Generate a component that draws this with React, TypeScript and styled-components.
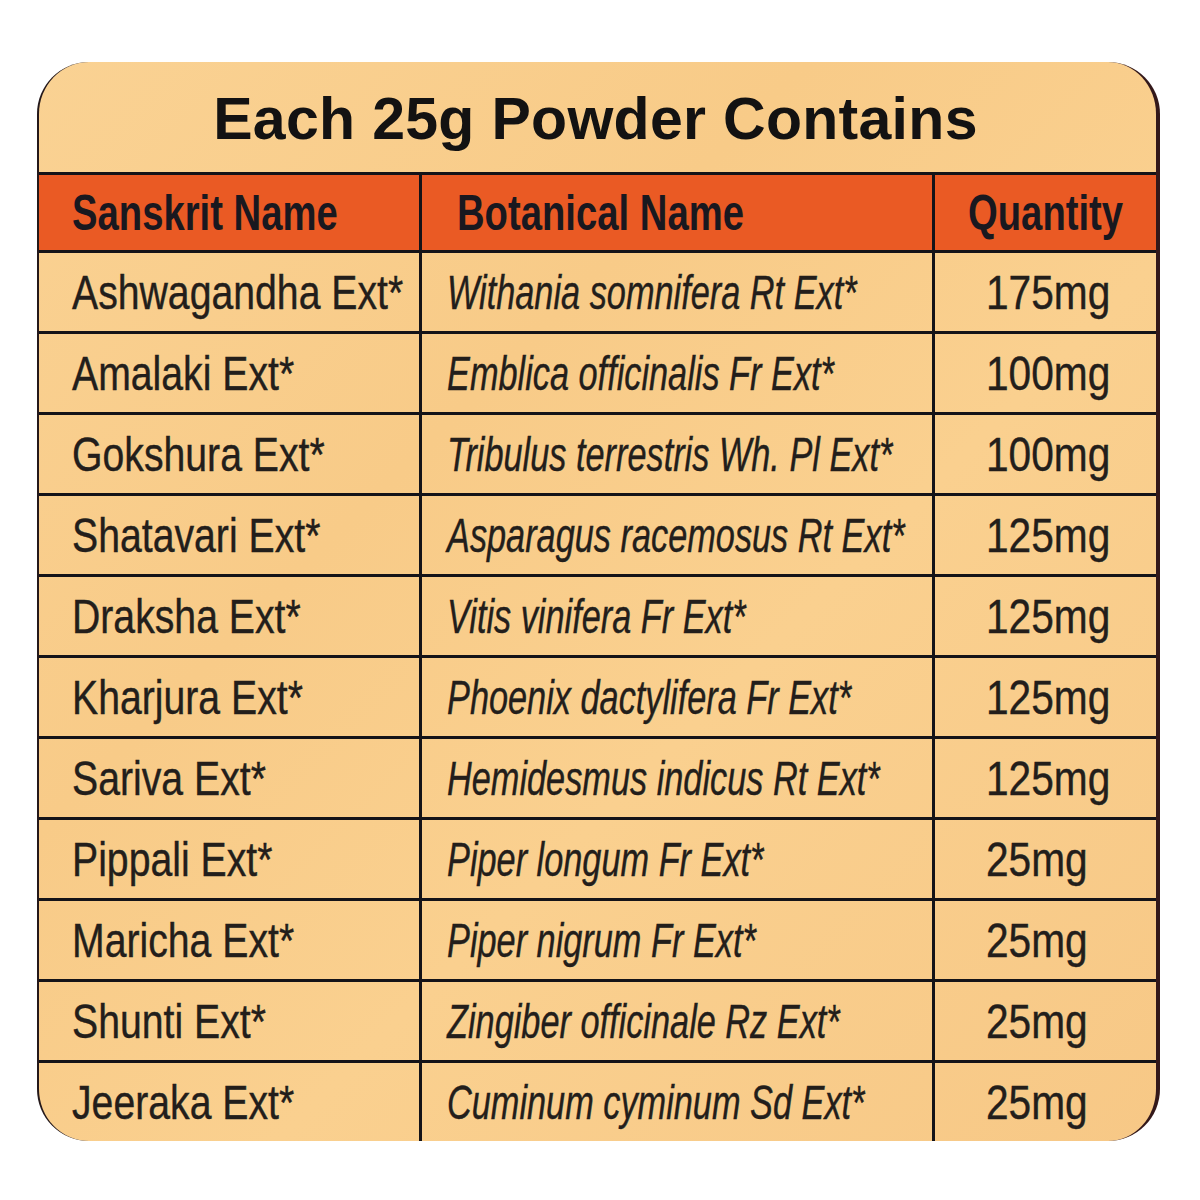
import React from 'react';
import styled, { createGlobalStyle } from 'styled-components';

const GlobalStyle = createGlobalStyle`
  html, body {
    margin: 0;
    padding: 0;
    background: #ffffff;
  }
  body {
    font-family: 'Liberation Sans', Arial, sans-serif;
  }
`;

interface Ingredient {
  sanskrit: string;
  botanical: string;
  quantity: string;
}

const ingredients: Ingredient[] = [
  { sanskrit: 'Ashwagandha Ext*', botanical: 'Withania somnifera Rt Ext*', quantity: '175mg' },
  { sanskrit: 'Amalaki Ext*', botanical: 'Emblica officinalis Fr Ext*', quantity: '100mg' },
  { sanskrit: 'Gokshura Ext*', botanical: 'Tribulus terrestris Wh. Pl Ext*', quantity: '100mg' },
  { sanskrit: 'Shatavari Ext*', botanical: 'Asparagus racemosus Rt Ext*', quantity: '125mg' },
  { sanskrit: 'Draksha Ext*', botanical: 'Vitis vinifera Fr Ext*', quantity: '125mg' },
  { sanskrit: 'Kharjura Ext*', botanical: 'Phoenix dactylifera Fr Ext*', quantity: '125mg' },
  { sanskrit: 'Sariva Ext*', botanical: 'Hemidesmus indicus Rt Ext*', quantity: '125mg' },
  { sanskrit: 'Pippali Ext*', botanical: 'Piper longum Fr Ext*', quantity: '25mg' },
  { sanskrit: 'Maricha Ext*', botanical: 'Piper nigrum Fr Ext*', quantity: '25mg' },
  { sanskrit: 'Shunti Ext*', botanical: 'Zingiber officinale Rz Ext*', quantity: '25mg' },
  { sanskrit: 'Jeeraka Ext*', botanical: 'Cuminum cyminum Sd Ext*', quantity: '25mg' },
];

const LINE = '#141318';

const Page = styled.div`
  padding: 62px 0 0 37px;
`;

const Card = styled.div`
  box-sizing: border-box;
  width: 1123px;
  background: linear-gradient(
    135deg,
    #fad293 0%,
    #f8cb88 35%,
    #fad08f 60%,
    #f7c886 100%
  );
  border-left: 2px solid #24181a;
  border-right: 4px solid #33181a;
  border-radius: 52px;
  overflow: hidden;
`;

const Title = styled.h1`
  margin: 0;
  height: 110px;
  display: flex;
  align-items: center;
  justify-content: center;
  padding-top: 4px;
  padding-right: 4px;
  box-sizing: border-box;
  font-family: 'Liberation Sans', Arial, sans-serif;
  font-weight: 700;
  font-size: 59px;
  color: #131212;
  letter-spacing: 0.3px;
`;

const Row = styled.div<{ $header?: boolean }>`
  display: grid;
  grid-template-columns: 380px 513px 1fr;
  box-sizing: border-box;
  height: ${({ $header }) => ($header ? '78px' : '81px')};
  border-top: 3px solid ${LINE};
  background: ${({ $header }) => ($header ? '#ea5a24' : 'transparent')};
`;

const Cell = styled.div<{ $divider?: boolean; $pad: number }>`
  box-sizing: border-box;
  display: flex;
  align-items: center;
  padding-left: ${({ $pad }) => $pad}px;
  border-left: ${({ $divider }) => ($divider ? `3px solid ${LINE}` : 'none')};
  white-space: nowrap;
`;

const HeadText = styled.span`
  display: inline-block;
  font-family: 'Liberation Sans', Arial, sans-serif;
  font-weight: 700;
  font-size: 50px;
  line-height: 1;
  color: #19181f;
  transform: scaleX(0.765);
  transform-origin: left center;
`;

const BodyText = styled.span<{ $italic?: boolean; $scale: number }>`
  display: inline-block;
  font-family: 'Liberation Sans', Arial, sans-serif;
  font-weight: 400;
  font-style: ${({ $italic }) => ($italic ? 'italic' : 'normal')};
  font-size: 49px;
  line-height: 1;
  color: #231e1b;
  -webkit-text-stroke: 0.4px #231e1b;
  transform: scaleX(${({ $scale }) => $scale});
  transform-origin: left center;
`;

export default function App() {
  return (
    <>
      <GlobalStyle />
      <Page>
        <Card>
          <Title>Each 25g Powder Contains</Title>
          <Row $header>
            <Cell $pad={33}>
              <HeadText>Sanskrit Name</HeadText>
            </Cell>
            <Cell $divider $pad={35}>
              <HeadText>Botanical Name</HeadText>
            </Cell>
            <Cell $divider $pad={33}>
              <HeadText>Quantity</HeadText>
            </Cell>
          </Row>
          {ingredients.map((item) => (
            <Row key={item.sanskrit}>
              <Cell $pad={33}>
                <BodyText $scale={0.8}>{item.sanskrit}</BodyText>
              </Cell>
              <Cell $divider $pad={25}>
                <BodyText $italic $scale={0.7}>
                  {item.botanical}
                </BodyText>
              </Cell>
              <Cell $divider $pad={51}>
                <BodyText $scale={0.83}>{item.quantity}</BodyText>
              </Cell>
            </Row>
          ))}
        </Card>
      </Page>
    </>
  );
}
